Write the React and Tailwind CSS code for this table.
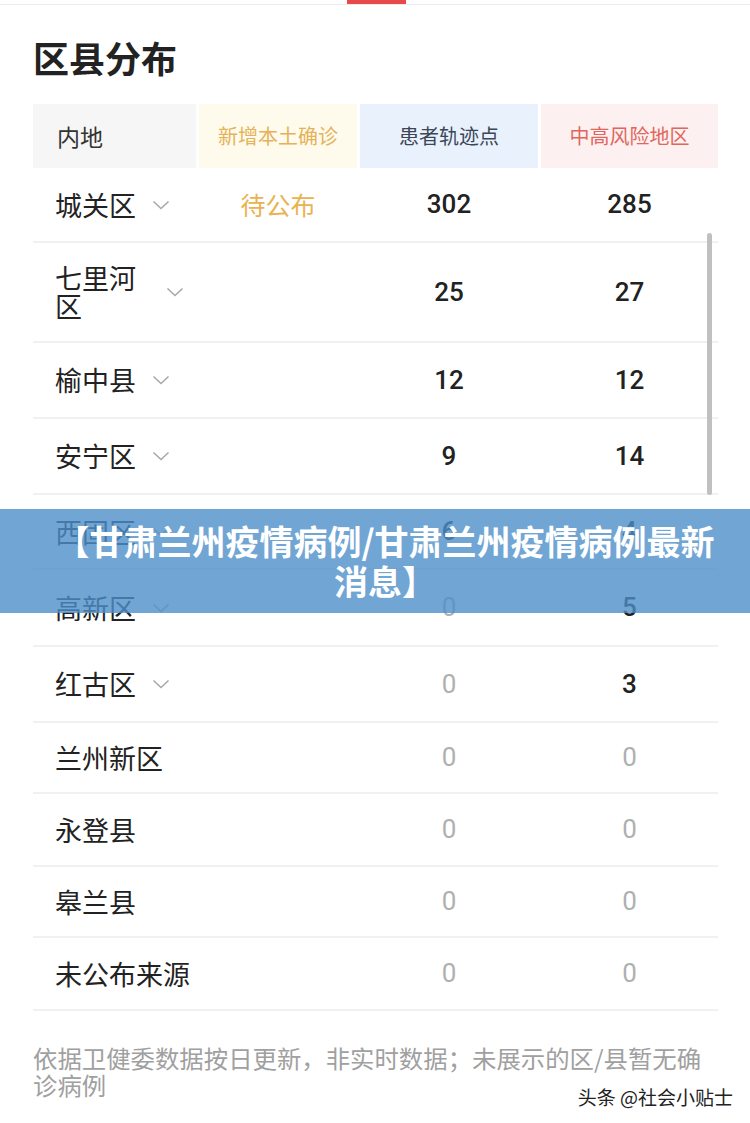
const rows = [
  { name: "城关区", chevron: true, h: "h-[75px]", pending: true, track: "302", risk: "285" },
  { name: "七里河区", chevron: true, h: "h-[100px]", track: "25", risk: "27" },
  { name: "榆中县", chevron: true, h: "h-[76px]", track: "12", risk: "12" },
  { name: "安宁区", chevron: true, h: "h-[76px]", track: "9", risk: "14" },
  { name: "西固区", chevron: true, h: "h-[75px]", track: "6", risk: "4" },
  { name: "高新区", chevron: true, h: "h-[77px]", track: "0", risk: "5" },
  { name: "红古区", chevron: true, h: "h-[76px]", track: "0", risk: "3" },
  { name: "兰州新区", h: "h-[71px]", track: "0", risk: "0" },
  { name: "永登县", h: "h-[73px]", track: "0", risk: "0" },
  { name: "皋兰县", h: "h-[71px]", track: "0", risk: "0" },
  { name: "未公布来源", h: "h-[73px]", track: "0", risk: "0" },
];

const cjk = { fontFamily: '"Noto Sans CJK SC", "Noto Sans", sans-serif' };
const num = { fontFamily: 'Roboto, "Noto Sans", sans-serif' };

const Chevron = () => (
  <svg width="18" height="10" viewBox="0 0 18 10" className="ml-[16px] shrink-0">
    <polyline points="1.5,1.5 9,8.5 16.5,1.5" fill="none" stroke="#a8a8a8" strokeWidth="1.6" />
  </svg>
);

const Value = ({ v }) =>
  v === "0" ? (
    <span className="text-[26px] text-[#b0b0b0]" style={num}>
      {v}
    </span>
  ) : (
    <span className="text-[26px] font-medium text-[#222]" style={num}>
      {v}
    </span>
  );

const Row = ({ row }) => (
  <div
    className={`grid grid-cols-[163px_158px_178px_177px] gap-x-[3px] items-center border-b-2 border-[#f1f1f1] ${row.h}`}
  >
    <div className="flex items-center pl-[22px]">
      <span
        className={`text-[27px] leading-[28px] text-[#222] ${row.chevron ? "max-w-[95px]" : "whitespace-nowrap"}`}
        style={cjk}
      >
        {row.name}
      </span>
      {row.chevron && <Chevron />}
    </div>
    <div className="text-center">
      {row.pending && (
        <span className="text-[25px] text-[#e9b352]" style={cjk}>
          待公布
        </span>
      )}
    </div>
    <div className="text-center">
      <Value v={row.track} />
    </div>
    <div className="text-center">
      <Value v={row.risk} />
    </div>
  </div>
);

export default function App() {
  return (
    <div className="relative w-[750px] h-[1123px] bg-white overflow-hidden" style={cjk}>
      <div className="h-[5px] border-b border-[#ececec]">
        <div className="ml-[347px] w-[59px] h-[4px] bg-[#e8494a]" />
      </div>

      <div className="h-[99px] pt-[34px] pl-[33px]">
        <h1 className="text-[36px] leading-[36px] font-bold text-[#222]">区县分布</h1>
      </div>

      <div className="mx-[33px] w-[685px]">
        <div className="grid grid-cols-[163px_158px_178px_177px] gap-x-[3px] h-[64px]">
          <div className="flex items-center pl-[24px] bg-[#f6f6f6] text-[23px] text-[#333]">内地</div>
          <div className="flex items-center justify-center bg-[#fefbec] text-[20px] text-[#e5b25a]">
            新增本土确诊
          </div>
          <div className="flex items-center justify-center bg-[#e9f1fd] text-[20px] text-[#3c4657]">
            患者轨迹点
          </div>
          <div className="flex items-center justify-center bg-[#fdf0f0] text-[20px] text-[#e0675c]">
            中高风险地区
          </div>
        </div>
        {rows.map((r) => (
          <Row key={r.name} row={r} />
        ))}
      </div>

      <p className="mt-[33px] pl-[33px] pr-[37px] text-[24.4px] leading-[27px] text-[#a0a0a0]">
        依据卫健委数据按日更新，非实时数据；未展示的区/县暂无确诊病例
      </p>

      <div className="absolute right-[38px] top-[233px] w-[5px] h-[262px] rounded-full bg-[#c0c0c0]" />

      <div className="absolute left-0 right-0 top-[509px] h-[104px] bg-[#4d8ec9]/80 pt-[12px] pl-[45px] pr-[25px] text-center">
        <p className="text-[34px] leading-[40px] font-bold text-white">
          【甘肃兰州疫情病例/甘肃兰州疫情病例最新消息】
        </p>
      </div>

      <div
        className="absolute right-[17px] top-[1086px] text-[19px] leading-[22px] text-[#222]"
        style={{ textShadow: "0 0 2px #fff, 0 0 2px #fff" }}
      >
        头条 @社会小贴士
      </div>
    </div>
  );
}
